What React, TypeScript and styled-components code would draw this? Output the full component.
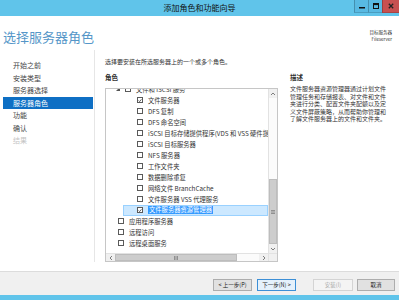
import React from "react";
import styled, { createGlobalStyle } from "styled-components";

const GlobalStyle = createGlobalStyle`
  html, body { margin: 0; padding: 0; background: #fff; }
  body { font-family: "Noto Sans CJK SC", "Noto Sans", sans-serif; }
  * { box-sizing: border-box; }
`;

const BLUE = "#60c4ea";

const Window = styled.div`
  width: 399px;
  height: 300px;
  display: flex;
  flex-direction: column;
  background: #fff;
  overflow: hidden;
`;

const TitleBar = styled.div`
  height: 16px;
  flex: none;
  background: ${BLUE};
  display: grid;
  grid-template-columns: 1fr auto 1fr;
  align-items: start;
`;

const TitleText = styled.div`
  grid-column: 2;
  font-size: 8px;
  line-height: 16px;
  color: #111;
`;

const WinButtons = styled.div`
  grid-column: 3;
  justify-self: end;
  display: flex;
  height: 13px;
`;

const WinButton = styled.div<{ $w: number; $close?: boolean }>`
  width: ${(p) => p.$w}px;
  height: 13px;
  display: flex;
  align-items: center;
  justify-content: center;
  background: ${(p) => (p.$close ? "#c75050" : "#58b9e2")};
  border-left: 1px solid rgba(0, 0, 0, 0.22);
  border-bottom: 1px solid rgba(0, 0, 0, 0.15);
`;

const Header = styled.div`
  height: 34px;
  flex: none;
  display: flex;
  justify-content: space-between;
  align-items: flex-start;
  padding: 14px 7px 0 3px;
`;

const Heading = styled.h1`
  margin: 0;
  font-size: 13px;
  line-height: 13px;
  font-weight: 400;
  color: #5596c8;
`;

const Target = styled.div`
  display: flex;
  flex-direction: column;
  align-items: flex-end;
  gap: 2px;
  font-size: 4.5px;
  line-height: 5px;
  color: #333;
`;

const Body = styled.div`
  flex: 1;
  display: flex;
  min-height: 0;
`;

const Nav = styled.nav`
  width: 95px;
  flex: none;
  padding: 9px 1px 0 3px;
  margin-bottom: 9px;
  border-right: 1px solid #e6e6e6;
  display: flex;
  flex-direction: column;
`;

const NavItem = styled.div<{ $active?: boolean; $disabled?: boolean }>`
  height: 12.5px;
  display: flex;
  align-items: center;
  padding-left: 10px;
  font-size: 7px;
  color: ${(p) => (p.$active ? "#fff" : p.$disabled ? "#c4c4c4" : "#444")};
  background: ${(p) => (p.$active ? "#0e6fc4" : "transparent")};
`;

const Main = styled.div`
  flex: 1;
  display: flex;
  flex-direction: column;
  padding: 8px 0 9px 10px;
  min-width: 0;
`;

const Subtitle = styled.div`
  font-size: 6px;
  line-height: 8px;
  color: #333;
`;

const Columns = styled.div`
  flex: 1;
  display: flex;
  gap: 12px;
  margin-top: 7px;
  min-height: 0;
`;

const LeftCol = styled.div`
  width: 173px;
  display: flex;
  flex-direction: column;
`;

const RightCol = styled.div`
  width: 97px;
  display: flex;
  flex-direction: column;
`;

const Label = styled.div`
  font-size: 6.5px;
  line-height: 8px;
  font-weight: 700;
  color: #333;
`;

const DescText = styled.div`
  margin-top: 4px;
  font-size: 6px;
  line-height: 7.6px;
  color: #333;
  white-space: nowrap;
`;

const ListBox = styled.div`
  flex: 1;
  margin-top: 7px;
  border: 1px solid #c6c6c6;
  display: grid;
  grid-template-columns: 1fr 9px;
  grid-template-rows: 1fr 8px;
  min-height: 0;
`;

const ListViewport = styled.div`
  overflow: hidden;
  min-width: 0;
  min-height: 0;
`;

const ListInner = styled.div`
  margin-top: -5.5px;
`;

const Row = styled.div<{ $indent: number; $selected?: boolean }>`
  height: 11px;
  display: flex;
  align-items: center;
  gap: 5px;
  white-space: nowrap;
  font-size: 6.3px;
  color: #333;
  margin-left: ${(p) => (p.$selected ? 17 : 0)}px;
  padding-left: ${(p) => (p.$selected ? p.$indent - 18 : p.$indent)}px;
  background: ${(p) => (p.$selected ? "#cce8ff" : "transparent")};
  border: ${(p) => (p.$selected ? "1px solid #99d1ff" : "none")};
`;

const Box = styled.div`
  width: 6px;
  height: 6px;
  flex: none;
  border: 1px solid #5a5a5a;
  background: #fff;
  display: flex;
  align-items: center;
  justify-content: center;
`;

const Expander = styled.div`
  width: 4px;
  height: 4px;
  flex: none;
  background: #555;
  clip-path: polygon(100% 0, 100% 100%, 0 100%);
`;

const SelText = styled.span`
  background: #3399ff;
  color: #fff;
  padding: 0 1px;
  line-height: 8px;
`;

const VScroll = styled.div`
  background: #f0f0f0;
  border-left: 1px solid #e2e2e2;
  display: flex;
  flex-direction: column;
`;

const HScroll = styled.div`
  background: #f0f0f0;
  border-top: 1px solid #e2e2e2;
  display: flex;
`;

const Corner = styled.div`
  background: #f0f0f0;
  border-top: 1px solid #e2e2e2;
  border-left: 1px solid #e2e2e2;
`;

const Arrow = styled.div`
  flex: none;
  width: 100%;
  height: 9px;
  display: flex;
  align-items: center;
  justify-content: center;
`;

const HArrow = styled.div`
  flex: none;
  width: 9px;
  height: 100%;
  display: flex;
  align-items: center;
  justify-content: center;
`;

const VTrack = styled.div`
  flex: 1;
  display: flex;
  flex-direction: column;
  justify-content: flex-end;
  background: #fbfbfb;
`;

const HTrack = styled.div`
  flex: 1;
  display: flex;
  background: #fbfbfb;
`;

const VThumb = styled.div`
  height: 65px;
  background: #cdcdcd;
  border: 1px solid #bdbdbd;
  display: flex;
  align-items: center;
  justify-content: center;
`;

const HThumb = styled.div`
  width: 122px;
  background: #cdcdcd;
  border: 1px solid #bdbdbd;
  display: flex;
  align-items: center;
  justify-content: center;
`;

const Footer = styled.div`
  height: 24px;
  flex: none;
  background: #f0f0f0;
  border-top: 1px solid #dcdcdc;
  display: flex;
  justify-content: flex-end;
  align-items: flex-start;
  gap: 17px;
  padding: 7px 4px 0 0;
`;

const ButtonGroup = styled.div<{ $gap: number }>`
  display: flex;
  gap: ${(p) => p.$gap}px;
`;

const Button = styled.button<{ $w: number; $primary?: boolean }>`
  width: ${(p) => p.$w}px;
  height: 12px;
  padding: 0;
  margin: 0;
  font-family: inherit;
  font-size: 5.5px;
  line-height: 10px;
  color: #222;
  background: ${(p) => (p.$primary ? "#e5f1fb" : "#e1e1e1")};
  border: 1px solid ${(p) => (p.$primary ? "#3c8fd6" : "#adadad")};
  &:disabled {
    color: #a8a8a8;
    background: #f4f4f4;
    border-color: #d4d4d4;
  }
`;

const BottomStrip = styled.div`
  height: 5px;
  flex: none;
  background: ${BLUE};
`;

const Chevron = ({ dir }: { dir: "up" | "down" | "left" | "right" }) => {
  const pts = {
    up: "1,4 3,2 5,4",
    down: "1,2 3,4 5,2",
    left: "4,1 2,3 4,5",
    right: "2,1 4,3 2,5",
  }[dir];
  return (
    <svg width="6" height="6" viewBox="0 0 6 6">
      <polyline points={pts} fill="none" stroke="#606060" strokeWidth="0.8" />
    </svg>
  );
};

const Check = () => (
  <svg width="5" height="5" viewBox="0 0 5 5">
    <polyline points="0.8,2.5 2,3.8 4.3,1" fill="none" stroke="#222" strokeWidth="0.9" />
  </svg>
);

type RowData = {
  text: string;
  indent: number;
  checked?: boolean;
  selected?: boolean;
  expander?: boolean;
};

const rows: RowData[] = [
  { text: "文件和 iSCSI 服务", indent: 10, expander: true },
  { text: "文件服务器", indent: 31, checked: true },
  { text: "DFS 复制", indent: 31 },
  { text: "DFS 命名空间", indent: 31 },
  { text: "iSCSI 目标存储提供程序(VDS 和 VSS 硬件提供程序)", indent: 31 },
  { text: "iSCSI 目标服务器", indent: 31 },
  { text: "NFS 服务器", indent: 31 },
  { text: "工作文件夹", indent: 31 },
  { text: "数据删除重复", indent: 31 },
  { text: "网络文件 BranchCache", indent: 31 },
  { text: "文件服务器 VSS 代理服务", indent: 31 },
  { text: "文件服务器资源管理器", indent: 31, checked: true, selected: true },
  { text: "应用程序服务器", indent: 12 },
  { text: "远程访问", indent: 12 },
  { text: "远程桌面服务", indent: 12 },
];

const navItems = ["开始之前", "安装类型", "服务器选择", "服务器角色", "功能", "确认", "结果"];

const descLines = [
  "文件服务器资源管理器通过计划文件",
  "管理任务和存储报表、对文件和文件",
  "夹进行分类、配置文件夹配额以及定",
  "义文件屏蔽策略，从而帮助你管理和",
  "了解文件服务器上的文件和文件夹。",
];

export default function App() {
  return (
    <>
      <GlobalStyle />
      <Window>
        <TitleBar>
          <TitleText>添加角色和功能向导</TitleText>
          <WinButtons>
            <WinButton $w={14}>
              <svg width="6" height="6" viewBox="0 0 6 6">
                <rect x="0" y="4" width="6" height="1.5" fill="#111" />
              </svg>
            </WinButton>
            <WinButton $w={14}>
              <svg width="6" height="6" viewBox="0 0 6 6">
                <rect x="0.5" y="0.5" width="5" height="5" fill="none" stroke="#111" strokeWidth="1" />
                <rect x="0.5" y="0.5" width="5" height="1.6" fill="#111" />
              </svg>
            </WinButton>
            <WinButton $w={17} $close>
              <svg width="6" height="6" viewBox="0 0 6 6">
                <path d="M0.8 0.8 L5.2 5.2 M5.2 0.8 L0.8 5.2" stroke="#222" strokeWidth="1.3" />
              </svg>
            </WinButton>
          </WinButtons>
        </TitleBar>
        <Header>
          <Heading>选择服务器角色</Heading>
          <Target>
            <span>目标服务器</span>
            <span>Fileserver</span>
          </Target>
        </Header>
        <Body>
          <Nav>
            {navItems.map((n, i) => (
              <NavItem key={n} $active={i === 3} $disabled={i === 6}>
                {n}
              </NavItem>
            ))}
          </Nav>
          <Main>
            <Subtitle>选择要安装在所选服务器上的一个或多个角色。</Subtitle>
            <Columns>
              <LeftCol>
                <Label>角色</Label>
                <ListBox>
                  <ListViewport>
                    <ListInner>
                      {rows.map((r) => (
                        <Row key={r.text} $indent={r.indent} $selected={r.selected}>
                          {r.expander && <Expander />}
                          <Box>{r.checked && <Check />}</Box>
                          {r.selected ? <SelText>{r.text}</SelText> : <span>{r.text}</span>}
                        </Row>
                      ))}
                    </ListInner>
                  </ListViewport>
                  <VScroll>
                    <Arrow>
                      <Chevron dir="up" />
                    </Arrow>
                    <VTrack>
                      <VThumb>
                        <svg width="4" height="4" viewBox="0 0 4 4">
                          <path d="M0 0.5H4M0 2H4M0 3.5H4" stroke="#666" strokeWidth="0.6" />
                        </svg>
                      </VThumb>
                    </VTrack>
                    <Arrow>
                      <Chevron dir="down" />
                    </Arrow>
                  </VScroll>
                  <HScroll>
                    <HArrow>
                      <Chevron dir="left" />
                    </HArrow>
                    <HTrack>
                      <HThumb>
                        <svg width="4" height="4" viewBox="0 0 4 4">
                          <path d="M0.5 0V4M2 0V4M3.5 0V4" stroke="#666" strokeWidth="0.6" />
                        </svg>
                      </HThumb>
                    </HTrack>
                    <HArrow>
                      <Chevron dir="right" />
                    </HArrow>
                  </HScroll>
                  <Corner />
                </ListBox>
              </LeftCol>
              <RightCol>
                <Label>描述</Label>
                <DescText>
                  {descLines.map((l) => (
                    <div key={l}>{l}</div>
                  ))}
                </DescText>
              </RightCol>
            </Columns>
          </Main>
        </Body>
        <Footer>
          <ButtonGroup $gap={5}>
            <Button $w={39}>&lt; 上一步(P)</Button>
            <Button $w={39} $primary>
              下一步(N) &gt;
            </Button>
          </ButtonGroup>
          <ButtonGroup $gap={4}>
            <Button $w={40} disabled>
              安装(I)
            </Button>
            <Button $w={38}>取消</Button>
          </ButtonGroup>
        </Footer>
        <BottomStrip />
      </Window>
    </>
  );
}
